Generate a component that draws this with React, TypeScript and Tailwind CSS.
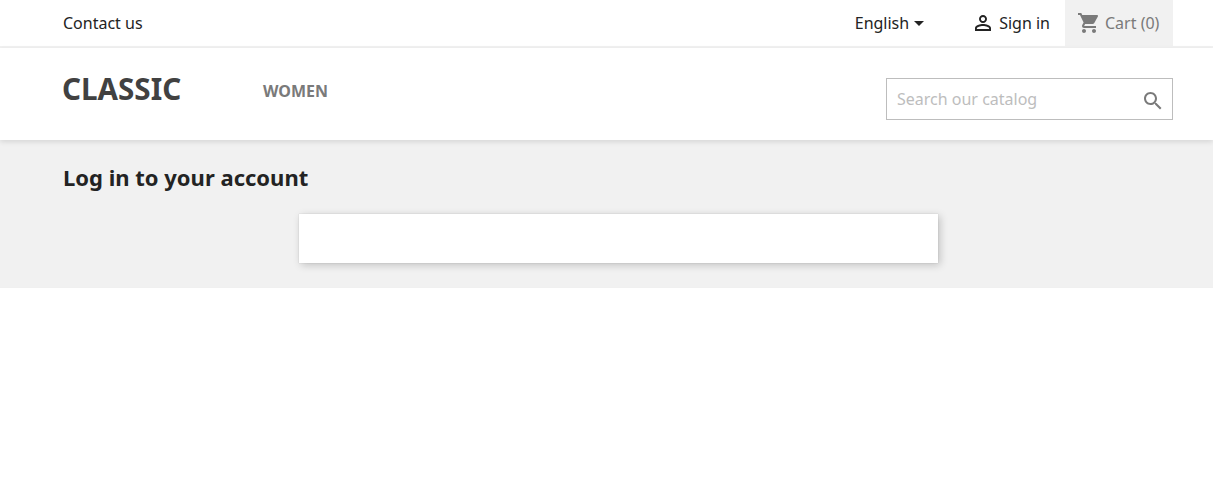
const App = () => {
  return (
    <div className="min-h-[498px] bg-white font-['Noto_Sans',sans-serif] text-[16px]">
      {/* Top nav */}
      <div className="h-[48px] border-b-2 border-[#f1f1f1] pl-[63px] pr-[40px] flex items-start justify-between">
        <a className="mt-[11px] leading-[24px] text-[#232323]">Contact us</a>
        <div className="flex items-start">
          <div className="mt-[11px] flex items-center leading-[24px] text-[#232323]">
            English
            <span className="ml-[5px] w-0 h-0 border-x-[5px] border-x-transparent border-t-[5px] border-t-[#232323]" />
          </div>
          <div className="ml-[47px] mt-[11px] flex items-center leading-[24px] text-[#232323]">
            <svg width="24" height="24" viewBox="0 0 24 24" fill="currentColor">
              <path d="M12 5.9c1.16 0 2.1.94 2.1 2.1s-.94 2.1-2.1 2.1S9.9 9.16 9.9 8s.94-2.1 2.1-2.1m0 9c2.97 0 6.1 1.46 6.1 2.1v1.1H5.9V17c0-.64 3.13-2.1 6.1-2.1M12 4C9.79 4 8 5.79 8 8s1.79 4 4 4 4-1.79 4-4-1.79-4-4-4zm0 9c-2.67 0-8 1.34-8 4v3h16v-3c0-2.66-5.33-4-8-4z" />
            </svg>
            <span className="ml-[4px]">Sign in</span>
          </div>
          <div className="ml-[15px] h-[46px] w-[108px] bg-[#f1f1f1] pl-[12px] flex items-center text-[#7a7a7a]">
            <svg className="-mt-[1px]" width="24" height="24" viewBox="0 0 24 24" fill="currentColor">
              <path d="M7 18c-1.1 0-1.99.9-1.99 2S5.9 22 7 22s2-.9 2-2-.9-2-2-2zM1 2v2h2l3.6 7.59-1.35 2.45c-.16.28-.25.61-.25.96 0 1.1.9 2 2 2h12v-2H7.42c-.14 0-.25-.11-.25-.25l.03-.12.9-1.63h7.45c.75 0 1.41-.41 1.75-1.03l3.58-6.49c.08-.14.12-.31.12-.48 0-.55-.45-1-1-1H5.21l-.94-2H1zm16 16c-1.1 0-1.99.9-1.99 2s.89 2 1.99 2 2-.9 2-2-.9-2-2-2z" />
            </svg>
            <span className="ml-[4px] -mt-[1px]">Cart (0)</span>
          </div>
        </div>
      </div>

      {/* Logo row */}
      <div className="relative h-[92px] pl-[62px] pr-[40px] flex items-start shadow-[0_2px_5px_0_rgba(0,0,0,0.11)]">
        <div className="mt-[20px] w-[119px] text-[29.6px] leading-[41px] font-bold text-[#414141]">CLASSIC</div>
        <div className="ml-[82px] mt-[32px] text-[16px] leading-[22px] font-bold text-[#7a7a7a]">WOMEN</div>
        <div className="ml-auto mt-[30px] w-[287px] h-[42px] border border-[#bdbdbd] pl-[10px] pr-[7px] flex items-center justify-between">
          <span className="text-[#bdbdbd] text-[16px]">Search our catalog</span>
          <svg className="mt-[4px] text-[#7a7a7a]" width="24" height="24" viewBox="0 0 24 24" fill="currentColor">
            <path d="M15.5 14h-.79l-.28-.27C15.41 12.59 16 11.11 16 9.5 16 5.91 13.09 3 9.5 3S3 5.91 3 9.5 5.91 16 9.5 16c1.61 0 3.09-.59 4.23-1.57l.27.28v.79l5 4.99L20.49 19l-4.99-5zm-6 0C7.01 14 5 11.99 5 9.5S7.01 5 9.5 5 14 7.01 14 9.5 11.99 14 9.5 14z" />
          </svg>
        </div>
      </div>

      {/* Page body */}
      <div className="h-[148px] bg-[#f1f1f1] border-b border-[#f0f0f0] pl-[63px] pt-[21px]">
        <h1 className="text-[22px] leading-[33px] font-bold text-[#232323]">Log in to your account</h1>
        <div className="ml-[236px] mt-[20px] w-[639px] h-[49px] bg-white shadow-[2px_2px_8px_0_rgba(0,0,0,0.2),0_0_1px_0_rgba(0,0,0,0.2)]" />
      </div>
    </div>
  );
};

export default App;
